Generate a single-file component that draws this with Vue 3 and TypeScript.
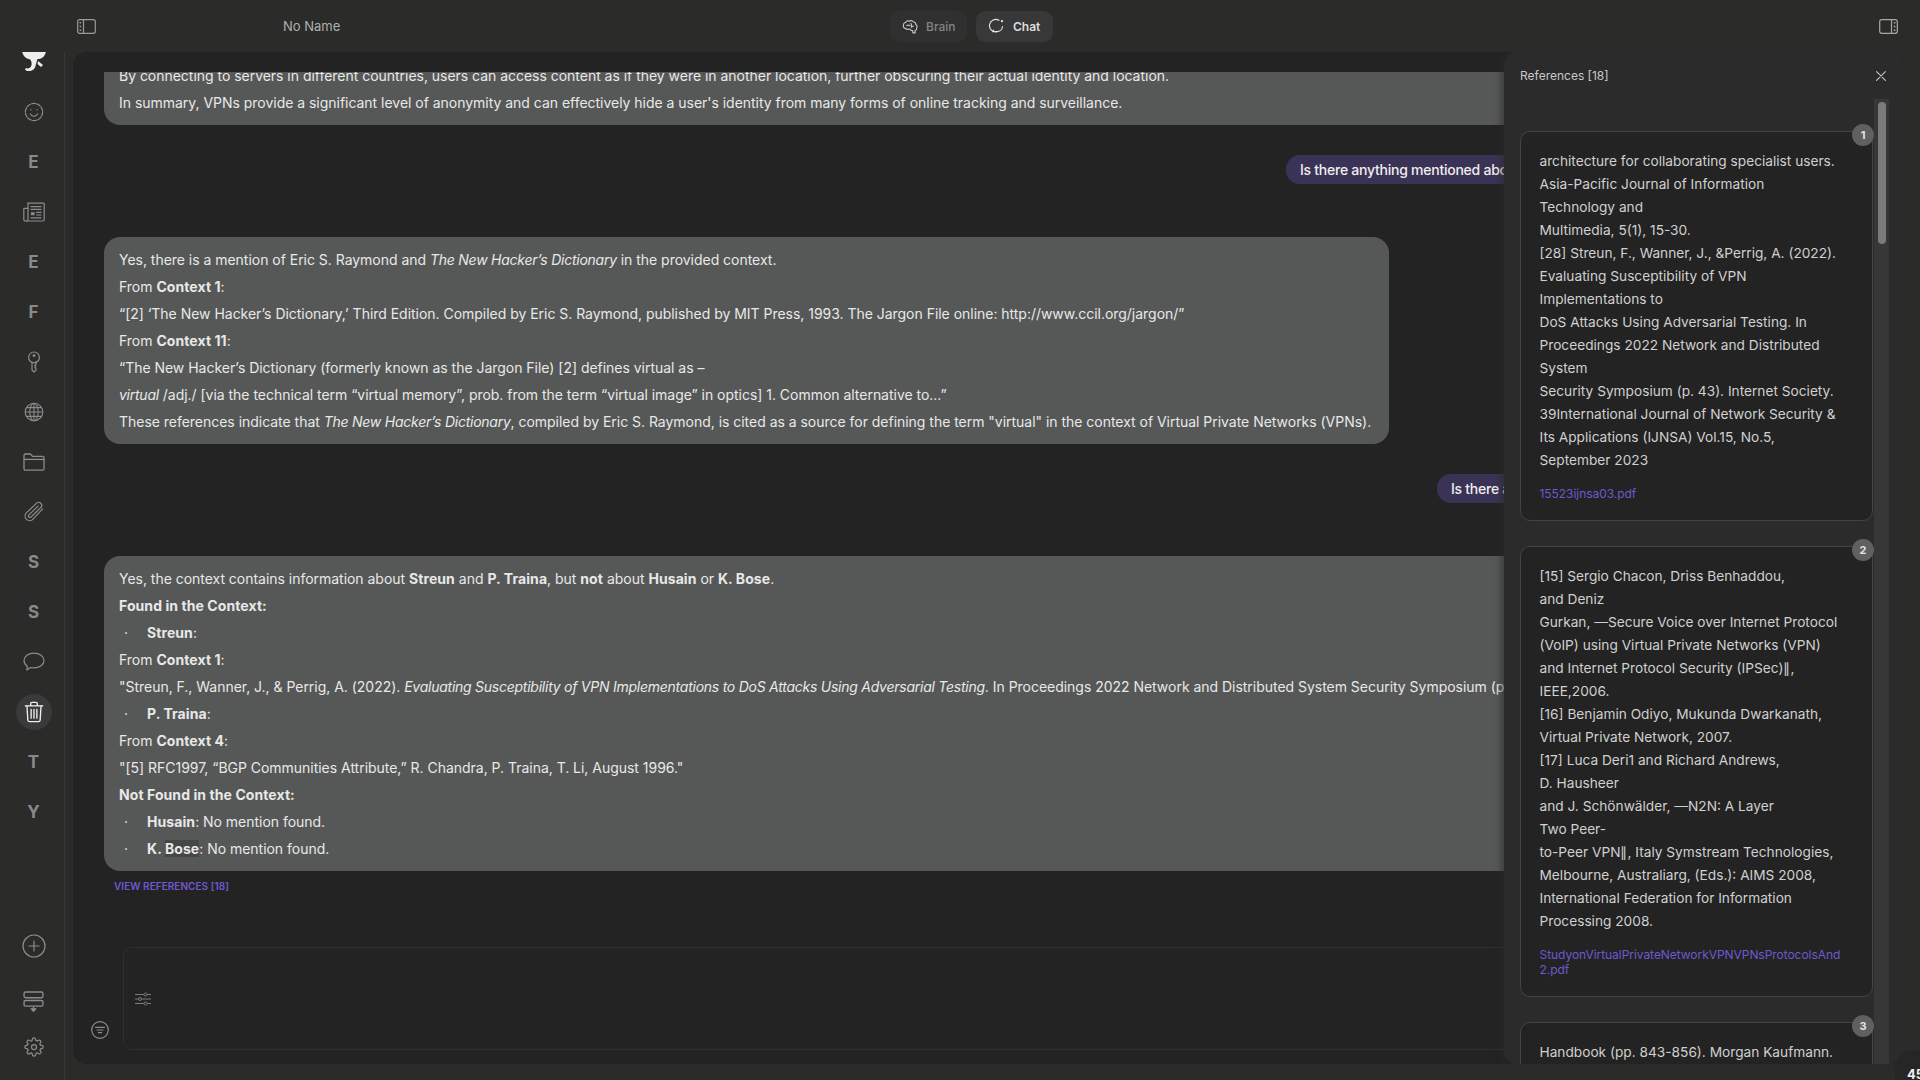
<script setup lang="ts">
type SideItem = { letter?: string; icon?: string; active?: boolean }

const sideItems: SideItem[] = [
  { icon: 'logo' },
  { icon: 'face' },
  { letter: 'E' },
  { icon: 'news' },
  { letter: 'E' },
  { letter: 'F' },
  { icon: 'key' },
  { icon: 'globe' },
  { icon: 'folder' },
  { icon: 'clip' },
  { letter: 'S' },
  { letter: 'S' },
  { icon: 'bubble' },
  { icon: 'trash', active: true },
  { letter: 'T' },
  { letter: 'Y' },
]

const cards = [
  {
    lines: [
      'architecture for collaborating specialist users.',
      'Asia-Pacific Journal of Information',
      'Technology and',
      'Multimedia, 5(1), 15-30.',
      '[28] Streun, F., Wanner, J., &Perrig, A. (2022).',
      'Evaluating Susceptibility of VPN',
      'Implementations to',
      'DoS Attacks Using Adversarial Testing. In',
      'Proceedings 2022 Network and Distributed',
      'System',
      'Security Symposium (p. 43). Internet Society.',
      '39International Journal of Network Security &',
      'Its Applications (IJNSA) Vol.15, No.5,',
      'September 2023',
    ],
    file: '15523ijnsa03.pdf',
  },
  {
    lines: [
      '[15] Sergio Chacon, Driss Benhaddou,',
      'and Deniz',
      'Gurkan, —Secure Voice over Internet Protocol',
      '(VoIP) using Virtual Private Networks (VPN)',
      'and Internet Protocol Security (IPSec)∥,',
      'IEEE,2006.',
      '[16] Benjamin Odiyo, Mukunda Dwarkanath,',
      'Virtual Private Network, 2007.',
      '[17] Luca Deri1 and Richard Andrews,',
      'D. Hausheer',
      'and J. Schönwälder, —N2N: A Layer',
      'Two Peer-',
      'to-Peer VPN∥, Italy Symstream Technologies,',
      'Melbourne, Australiarg, (Eds.): AIMS 2008,',
      'International Federation for Information',
      'Processing 2008.',
    ],
    file: 'StudyonVirtualPrivateNetworkVPNVPNsProtocolsAnd2.pdf',
  },
  {
    lines: ['Handbook (pp. 843-856). Morgan Kaufmann.', 'Additional reference text continues here.'],
    file: '',
  },
]
</script>

<template>
  <div class="app">
    <header class="top">
      <svg class="toggle" viewBox="0 0 19 15" width="19" height="15" fill="none" stroke="#9a9a9a" stroke-width="1.2">
        <rect x="0.7" y="0.7" width="17.6" height="13.6" rx="2" />
        <path d="M6.5 0.7V14.3" />
        <path d="M2.6 3.8h1.6M2.6 7.5h1.6M2.6 11.2h1.6" stroke-width="1.6" />
      </svg>
      <span class="doc-name">No Name</span>
      <nav class="tabs">
        <button class="tab">
          <svg viewBox="0 0 18 18" width="17" height="17" fill="none" stroke="#c4c4c4" stroke-width="1.2" stroke-linecap="round" stroke-linejoin="round">
            <path d="M3.2 10.8C1.6 10.2 1 8.8 1.6 7.5 1.4 6 2.5 4.8 3.9 4.8 4.5 3.3 6.2 2.7 7.5 3.4 8.8 2.4 10.9 2.6 11.8 4 13.5 4 14.7 5.3 14.6 6.8 16 7.6 16.4 9.3 15.4 10.6 15.7 12 14.9 13.2 13.7 13.4L14 15.8H11.6L11.2 13.4C9.6 13.5 8.8 12.6 8.3 11.6 6.8 12.2 5 12.3 3.2 10.8Z" />
            <path d="M5 8.2c1-.9 2.2-.9 3.2-.2M9.3 5.6c.9.9 1 2.1.4 3M12 8.6c-.9 0-1.6.5-2 1.3" />
          </svg>
          <span>Brain</span>
        </button>
        <button class="tab tab-on">
          <svg viewBox="0 0 18 18" width="16" height="16" fill="none" stroke="#e4e4e4" stroke-width="1.3" stroke-linecap="round" stroke-linejoin="round">
            <path d="M11.2 2.6A7 7 0 1 0 9 15.4H4.2l1-1.7" />
            <path d="M9 15.4a6.4 6.4 0 0 0 6.2-5.8" />
            <circle cx="14.6" cy="3.6" r="1.3" fill="#e4e4e4" stroke="none" />
          </svg>
          <span>Chat</span>
        </button>
      </nav>
      <svg class="toggle-right" viewBox="0 0 19 15" width="19" height="15" fill="none" stroke="#a8a8a8" stroke-width="1.2">
        <rect x="0.7" y="0.7" width="17.6" height="13.6" rx="2" />
        <path d="M12.5 0.7V14.3" />
        <path d="M14.8 3.8h1.6M14.8 7.5h1.6M14.8 11.2h1.6" stroke-width="1.6" />
      </svg>
    </header>

    <div class="body">
      <aside class="side">
        <div class="side-list">
          <div v-for="(item, i) in sideItems" :key="i" class="side-item">
            <span v-if="item.letter" class="side-letter">{{ item.letter }}</span>
            <span v-else class="side-icon" :class="{ active: item.active }">
              <svg v-if="item.icon === 'logo'" viewBox="0 0 26 22" width="26" height="22" fill="#ededed">
                <path d="M1 0H25C24.500 4 22 7.500 18 8L16.500 8C15.500 11 15 13 14.500 15 14 18 11 20 8 20 6.500 20 5 19.500 4 18.500L5 17C7 18 10 17 10.500 14 11 11 10 8.500 8 8 4.500 7.500 1.500 4 1 0Z" />
                <path d="M17 10 22 14 20 16 16.500 13Z" />
              </svg>
              <svg v-else-if="item.icon === 'face'" viewBox="0 0 20 20" width="20" height="20" fill="none" stroke="#8c8c8c" stroke-width="1.2" stroke-linecap="round">
                <circle cx="10" cy="10" r="8.6" stroke-dasharray="4 1.4" />
                <path d="M6.4 12c1 1.7 2.2 2.4 3.6 2.4s2.6-.7 3.6-2.4" />
                <circle cx="7" cy="7.8" r=".7" fill="#8c8c8c" stroke="none" />
                <circle cx="13" cy="7.8" r=".7" fill="#8c8c8c" stroke="none" />
              </svg>
              <svg v-else-if="item.icon === 'news'" viewBox="0 0 22 20" width="22" height="20" fill="none" stroke="#8c8c8c" stroke-width="1.2" stroke-linecap="round" stroke-linejoin="round">
                <path d="M5 1.2h15.4a.8.8 0 0 1 .8.8v15.6a1.4 1.4 0 0 1-1.4 1.4H2.4A1.6 1.6 0 0 1 .8 17.4V6.4h4.2" />
                <path d="M5 1.2V17.4a1.6 1.6 0 0 1-1.6 1.6" />
                <path d="M8 4.6h10M8 7.4h10M13.6 10.4H18M13.6 13H18M8 15.8h10" />
                <rect x="8" y="10.2" width="3.6" height="3" fill="#8c8c8c" stroke="none" />
              </svg>
              <svg v-else-if="item.icon === 'key'" viewBox="0 0 16 22" width="16" height="22" fill="none" stroke="#8c8c8c" stroke-width="1.2" stroke-linecap="round" stroke-linejoin="round">
                <circle cx="8" cy="6.4" r="5.4" />
                <circle cx="8" cy="4.6" r=".9" />
                <path d="M6 11.4V19l2 2 2-2v-1.4l-1.2-1 1.2-1.1-1.2-1 1.2-1.1v-2.9" />
              </svg>
              <svg v-else-if="item.icon === 'globe'" viewBox="0 0 20 20" width="20" height="20" fill="none" stroke="#8c8c8c" stroke-width="1.1">
                <circle cx="10" cy="10" r="8.8" />
                <ellipse cx="10" cy="10" rx="4.2" ry="8.8" />
                <path d="M10 1.2v17.6M1.2 10h17.6M2.4 5.6h15.2M2.4 14.4h15.2" />
              </svg>
              <svg v-else-if="item.icon === 'folder'" viewBox="0 0 22 18" width="22" height="18" fill="none" stroke="#8c8c8c" stroke-width="1.3" stroke-linejoin="round">
                <path d="M1 5.6V2.4A1.4 1.4 0 0 1 2.4 1h5l2.2 2.4h10A1.4 1.4 0 0 1 21 4.8v11a1.4 1.4 0 0 1-1.4 1.4H2.4A1.4 1.4 0 0 1 1 15.800z" />
                <path d="M1 6.400h20" />
              </svg>
              <svg v-else-if="item.icon === 'clip'" viewBox="0 0 24 24" width="22" height="22" fill="none" stroke="#8c8c8c" stroke-width="1.3" stroke-linecap="round" stroke-linejoin="round">
                <path d="M21.400 8.600 11 19.800a5 5 0 0 1-7.400-6.800L14.600 2.600a3.300 3.300 0 0 1 4.900 4.500L8.800 17.400a1.600 1.600 0 0 1-2.400-2.200L16.400 5.600" />
              </svg>
              <svg v-else-if="item.icon === 'bubble'" viewBox="0 0 22 20" width="22" height="20" fill="none" stroke="#8c8c8c" stroke-width="1.2" stroke-linejoin="round">
                <path d="M11 1.200c5.500 0 10 3.200 10 7.400 0 4.100-4.500 7.300-10 7.300-1.200 0-2.300-.1-3.400-.4L3.800 18l.6-3.600C2.300 13 1 11 1 8.600 1 4.400 5.500 1.200 11 1.200Z" />
              </svg>
              <svg v-else-if="item.icon === 'trash'" viewBox="0 0 18 20" width="20" height="22" fill="none" stroke="#f0f0f0" stroke-width="1.2" stroke-linecap="round" stroke-linejoin="round">
                <path d="M1 4.400h16M6 4.400V2.400A1.200 1.200 0 0 1 7.200 1.200h3.600A1.200 1.200 0 0 1 12 2.400v2" />
                <path d="M2.600 4.400l.8 13a1.600 1.600 0 0 0 1.600 1.400h8a1.600 1.600 0 0 0 1.600-1.400l.8-13" />
                <path d="M6.400 7.600v8M9 7.600v8M11.600 7.600v8" />
              </svg>
            </span>
          </div>
        </div>
        <div class="side-foot">
          <div class="foot-item gap-below">
            <svg viewBox="0 0 24 24" width="24" height="24" fill="none" stroke="#8c8c8c" stroke-width="1.2" stroke-linecap="round">
              <circle cx="12" cy="12" r="11" />
              <path d="M12 7v10M7 12h10" />
            </svg>
          </div>
          <div class="foot-item">
            <svg viewBox="0 0 20 20" width="21" height="21" fill="none" stroke="#8c8c8c" stroke-width="1.3" stroke-linejoin="round">
              <rect x="1" y="1" width="18" height="5.400" rx="1.400" />
              <rect x="1" y="9" width="18" height="5.400" rx="1.400" />
              <path d="M10 15v3.400" />
              <path d="M7.800 17l2.200 2.200 2.200-2.200z" fill="#8c8c8c" />
            </svg>
          </div>
          <div class="foot-item">
            <svg viewBox="0 0 24 24" width="20" height="20" fill="none" stroke="#8c8c8c" stroke-width="1.500" stroke-linecap="round" stroke-linejoin="round">
              <circle cx="12" cy="12" r="3" />
              <path d="M19.400 15a1.650 1.650 0 0 0 .33 1.820l.06.06a2 2 0 1 1-2.830 2.830l-.06-.06a1.650 1.650 0 0 0-2.820 1.170V21a2 2 0 0 1-4 0v-.09A1.650 1.650 0 0 0 7.230 19.740l-.06.06a2 2 0 1 1-2.830-2.830l.06-.06a1.650 1.650 0 0 0-1.170-2.820H3a2 2 0 0 1 0-4h.09A1.650 1.650 0 0 0 4.260 7.230l-.06-.06a2 2 0 1 1 2.830-2.830l.06.06a1.650 1.650 0 0 0 2.820-1.170V3a2 2 0 0 1 4 0v.09a1.650 1.650 0 0 0 2.820 1.170l.06-.06a2 2 0 1 1 2.830 2.830l-.06.06a1.650 1.650 0 0 0 1.170 2.820H21a2 2 0 0 1 0 4h-.09A1.650 1.650 0 0 0 19.400 15Z" />
            </svg>
          </div>
        </div>
      </aside>

      <main class="main">
        <section class="messages">
          <article class="bubble bubble-clipped">
            <p>By connecting to servers in different countries, users can access content as if they were in another location, further obscuring their actual identity and location.</p>
            <p>In summary, VPNs provide a significant level of anonymity and can effectively hide a user's identity from many forms of online tracking and surveillance.</p>
          </article>

          <div class="user user-one">Is there anything mentioned about Eric S. Raymond and The New Hacker's Dictionary?</div>

          <article class="bubble bubble-fit">
            <p>Yes, there is a mention of Eric S. Raymond and <em>The New Hacker’s Dictionary</em> in the provided context.</p>
            <p>From <strong>Context 1</strong>:</p>
            <p>“[2] ‘The New Hacker’s Dictionary,’ Third Edition. Compiled by Eric S. Raymond, published by MIT Press, 1993. The Jargon File online: http://www.ccil.org/jargon/”</p>
            <p>From <strong>Context 11</strong>:</p>
            <p>“The New Hacker’s Dictionary (formerly known as the Jargon File) [2] defines virtual as –</p>
            <p><em>virtual</em> /adj./ [via the technical term “virtual memory”, prob. from the term “virtual image” in optics] 1. Common alternative to...”</p>
            <p>These references indicate that <em>The New Hacker’s Dictionary</em>, compiled by Eric S. Raymond, is cited as a source for defining the term "virtual" in the context of Virtual Private Networks (VPNs).</p>
          </article>

          <div class="user user-two">Is there anything about Streun, P. Traina, Husain or K. Bose?</div>

          <article class="bubble">
            <p>Yes, the context contains information about <strong>Streun</strong> and <strong>P. Traina</strong>, but <strong>not</strong> about <strong>Husain</strong> or <strong>K. Bose</strong>.</p>
            <p><strong>Found in the Context:</strong></p>
            <p class="li"><span class="dot">·</span><span><strong>Streun</strong>:</span></p>
            <p>From <strong>Context 1</strong>:</p>
            <p>"Streun, F., Wanner, J., &amp; Perrig, A. (2022). <em>Evaluating Susceptibility of VPN Implementations to DoS Attacks Using Adversarial Testing</em>. In Proceedings 2022 Network and Distributed System Security Symposium (p. 43). Internet Society."</p>
            <p class="li"><span class="dot">·</span><span><strong>P. Traina</strong>:</span></p>
            <p>From <strong>Context 4</strong>:</p>
            <p>"[5] RFC1997, “BGP Communities Attribute,” R. Chandra, P. Traina, T. Li, August 1996."</p>
            <p><strong>Not Found in the Context:</strong></p>
            <p class="li"><span class="dot">·</span><span><strong>Husain</strong>: No mention found.</span></p>
            <p class="li"><span class="dot">·</span><span><strong>K. <span class="mark">Bose</span></strong>: No mention found.</span></p>
          </article>

          <a class="view-refs">VIEW REFERENCES [18]</a>
        </section>

        <section class="composer">
          <svg class="filter" viewBox="0 0 18 18" width="18" height="18" fill="none" stroke="#8c8c8c" stroke-width="1.2" stroke-linecap="round">
            <circle cx="9" cy="9" r="8.300" />
            <path d="M4.600 6.400h8.800M6 9h6M7.400 11.600h3.200" />
          </svg>
          <div class="input-box">
            <svg viewBox="0 0 16 14" width="16" height="14" fill="none" stroke="#7c7c7c" stroke-width="1">
              <path d="M0 2.500h16M0 7h16M0 11.500h16" />
              <circle cx="10.500" cy="2.500" r="1.500" fill="#232323" />
              <circle cx="5" cy="7" r="1.500" fill="#232323" />
              <circle cx="10.500" cy="11.500" r="1.500" fill="#232323" />
            </svg>
          </div>
        </section>
      </main>
    </div>

    <aside class="drawer">
      <div class="drawer-head">
        <span>References [18]</span>
        <svg viewBox="0 0 10 10" width="10" height="10" fill="none" stroke="#c8c8c8" stroke-width="1.1" stroke-linecap="round">
          <path d="M.6.600l8.800 8.800M9.400.600.600 9.400" />
        </svg>
      </div>
      <div class="drawer-scroll">
        <div class="cards">
          <div v-for="(card, i) in cards" :key="i" class="card">
            <span class="badge">{{ i + 1 }}</span>
            <div v-for="line in card.lines" :key="line" class="card-line">{{ line }}</div>
            <a v-if="card.file" class="card-file">{{ card.file }}</a>
          </div>
        </div>
        <div class="track"><div class="thumb"></div></div>
      </div>
    </aside>

    <div class="corner"><span>45</span></div>
  </div>
</template>

<style>
html,
body {
  margin: 0;
  background: #2b2b2a;
}
</style>

<style scoped>
.app {
  position: relative;
  width: 1920px;
  height: 1080px;
  overflow: hidden;
  display: flex;
  flex-direction: column;
  background: #2b2b2a;
  color: #e6e6e6;
  font-family: Inter, "Liberation Sans", sans-serif;
  font-size: 14px;
}
.top {
  flex: none;
  height: 52px;
  display: flex;
  align-items: center;
  padding: 0 22px 0 77px;
}
.toggle,
.toggle-right {
  flex: none;
}
.doc-name {
  margin-left: 187px;
  width: 100px;
  font-size: 13px;
  color: #b0b0b0;
}
.tabs {
  display: flex;
  gap: 9px;
  margin-left: 507px;
}
.tab {
  display: flex;
  align-items: center;
  gap: 7px;
  height: 31px;
  width: 77px;
  padding: 0 0 0 12px;
  border: 0;
  border-radius: 9px;
  background: #303030;
  color: #848484;
  font: 500 12px Inter, sans-serif;
}
.tab-on {
  background: #383838;
  color: #dcdcdc;
  font-weight: 600;
  gap: 8px;
  padding-left: 13px;
}
.toggle-right {
  margin-left: auto;
}
.body {
  flex: 1;
  min-height: 0;
  display: flex;
}
.side {
  flex: none;
  width: 64px;
  border-right: 1px solid #383838;
  display: flex;
  flex-direction: column;
  overflow: hidden;
  padding-bottom: 10px;
  box-sizing: content-box;
  height: 1018px;
}
.side-list {
  margin-top: -15px;
  padding-left: 3px;
}
.side-item {
  height: 50px;
  display: flex;
  align-items: center;
  justify-content: center;
}
.side-letter {
  font-size: 17px;
  font-weight: 700;
  color: #8a8a8a;
}
.side-icon {
  width: 36px;
  height: 36px;
  border-radius: 50%;
  display: flex;
  align-items: center;
  justify-content: center;
}
.side-icon.active {
  background: #3a3a3a;
}
.side-foot {
  margin-top: auto;
  padding-left: 3px;
}
.foot-item {
  height: 46px;
  display: flex;
  align-items: center;
  justify-content: center;
}
.gap-below {
  margin-bottom: 9px;
}
.main {
  flex: none;
  width: 1831px;
  margin: 0 0 16px 8px;
  background: #232323;
  border-radius: 14px 14px 0 14px;
  display: flex;
  flex-direction: column;
  overflow: hidden;
}
.messages {
  flex: none;
  height: 875px;
  margin-top: 20px;
  padding-left: 31px;
  overflow: hidden;
  display: flex;
  flex-direction: column;
  align-items: flex-start;
}
.bubble {
  flex: none;
  background: #565857;
  border-radius: 16px;
  padding: 9px 15px;
  white-space: nowrap;
  width: 1700px;
  line-height: 27px;
  color: #e8e8e8;
  box-sizing: border-box;
  letter-spacing: -0.025px;
}
.bubble p {
  margin: 0;
  height: 27px;
}
.bubble strong {
  font-weight: 700;
  letter-spacing: 0.08px;
}
.bubble em {
  letter-spacing: -0.25px;
}
.bubble-clipped {
  margin-top: -10px;
  padding-top: 0;
  border-radius: 0 0 0 16px;
}
.bubble-fit {
  width: 1285px;
}
.li {
  display: flex;
}
.dot {
  width: 28px;
  padding-left: 5px;
  box-sizing: border-box;
}
.mark {
  background: #454646;
}
.user {
  flex: none;
  height: 29px;
  line-height: 29px;
  padding: 0 14px;
  border-radius: 14px;
  background: #3b3355;
  color: #eeeeee;
  font-weight: 500;
  white-space: nowrap;
  letter-spacing: -0.25px;
}
.user-one {
  margin: 30px 0 53px 1182px;
}
.user-two {
  margin: 30px 0 53px 1333px;
}
.view-refs {
  margin: 9px 0 0 10px;
  font-size: 10px;
  line-height: 12px;
  font-weight: 600;
  letter-spacing: 0.05px;
  color: #6f58cf;
}
.composer {
  flex: 1;
  display: flex;
  align-items: flex-end;
  gap: 14px;
  padding: 0 0 14px 18px;
  min-height: 0;
}
.filter {
  flex: none;
  margin-bottom: 11px;
}
.input-box {
  flex: 1;
  height: 103px;
  box-sizing: border-box;
  border: 1px solid #2f2f2f;
  border-radius: 9px;
  display: flex;
  align-items: center;
  padding-left: 11px;
}
.drawer {
  position: absolute;
  left: 1504px;
  top: 52px;
  width: 400px;
  height: 1012px;
  background: #2b2b2b;
  border-radius: 14px;
  box-shadow: -3px 0 6px rgba(43, 43, 43, 0.6);
  overflow: hidden;
  padding-left: 16px;
  box-sizing: border-box;
  display: flex;
  flex-direction: column;
}
.drawer-head {
  flex: none;
  height: 47px;
  display: flex;
  align-items: center;
  justify-content: space-between;
  padding-right: 18px;
  font-size: 12px;
  color: #c8c8c8;
}
.drawer-scroll {
  flex: 1;
  min-height: 0;
  display: flex;
  overflow: hidden;
}
.cards {
  flex: none;
  width: 353px;
  padding: 32px 0 0;
  box-sizing: border-box;
  display: flex;
  flex-direction: column;
  gap: 25px;
}
.card {
  position: relative;
  flex: none;
  background: #232323;
  border: 1.5px solid #444444;
  border-radius: 10px;
  padding: 18px 27px 19px 18.500px;
  box-sizing: border-box;
}
.card-line {
  font-size: 13.700px;
  line-height: 23px;
  color: #d0d0d0;
  white-space: nowrap;
}
.card-file {
  display: block;
  margin-top: 14px;
  font-size: 12px;
  line-height: 15px;
  letter-spacing: -0.05px;
  color: #6f58cf;
  word-break: break-all;
}
.badge {
  position: absolute;
  top: -8px;
  right: -2px;
  width: 22px;
  height: 22px;
  border-radius: 50%;
  background: #5f605f;
  color: #e4e4e4;
  font-size: 11px;
  font-weight: 700;
  display: flex;
  align-items: center;
  justify-content: center;
}
.track {
  flex: none;
  width: 15px;
  margin-left: 1px;
  background: #373737;
  padding-top: 3px;
  box-sizing: border-box;
}
.thumb {
  width: 8px;
  height: 142px;
  margin-left: 4px;
  border-radius: 4px;
  background: #7b7b7b;
}
.corner {
  position: absolute;
  left: 1895px;
  top: 1050px;
  width: 60px;
  height: 60px;
  border-radius: 18px;
  background: #262626;
}
.corner span {
  position: absolute;
  left: 12px;
  top: 16px;
  font-size: 13px;
  font-weight: 700;
  color: #f0f0f0;
}
</style>
